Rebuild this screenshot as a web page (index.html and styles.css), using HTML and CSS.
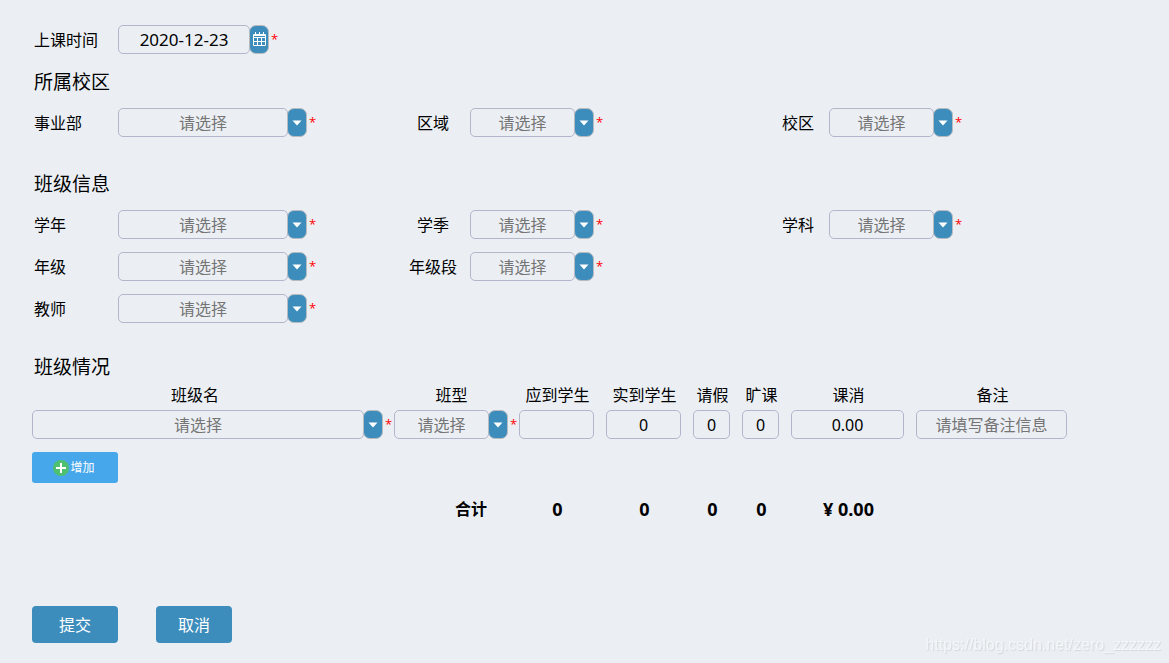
FILE: index.html
```html
<!DOCTYPE html>
<html lang="zh-CN">
<head>
  <meta charset="UTF-8" />
  <meta name="viewport" content="width=device-width, initial-scale=1.0" />
  <title>课消登记</title>
  <link rel="stylesheet" href="styles.css">
</head>
<body>
  <svg class="sprite" aria-hidden="true">
    <symbol id="caret" viewBox="0 0 10 6"><path d="M.5.5h9L5 5.500z" fill="currentColor" /></symbol>
  </svg>

  <form class="page">
    <div class="row">
      <label for="date">上课时间</label>
      <div class="field">
        <input type="text" id="date" class="box date" value="2020-12-23" />
        <button type="button" class="side" aria-label="选择日期">
          <svg width="13" height="15" viewBox="0 0 13 15" fill="none" stroke="currentColor">
            <path d="M.5 2.500h12v11H.5zM1 5.500h11M1 9.500h11M4.500 5v8M8.500 5v8" />
            <path d="M1 3.500h11M2.500 0v3M6.500 0v3M10.500 0v3" />
          </svg>
        </button>
        <span class="star">*</span>
      </div>
    </div>

    <h3>所属校区</h3>
    <div class="row">
      <label for="dept">事业部</label>
      <div class="field">
        <select id="dept" class="box wide"><option>请选择</option></select>
        <span class="side"><svg width="10" height="6"><use href="#caret" /></svg></span>
        <span class="star">*</span>
      </div>
      <label for="area" class="mid">区域</label>
      <div class="field">
        <select id="area" class="box"><option>请选择</option></select>
        <span class="side"><svg width="10" height="6"><use href="#caret" /></svg></span>
        <span class="star">*</span>
      </div>
      <label for="campus" class="mid">校区</label>
      <div class="field">
        <select id="campus" class="box"><option>请选择</option></select>
        <span class="side"><svg width="10" height="6"><use href="#caret" /></svg></span>
        <span class="star">*</span>
      </div>
    </div>

    <h3 class="spaced">班级信息</h3>
    <div class="row">
      <label for="year">学年</label>
      <div class="field">
        <select id="year" class="box wide"><option>请选择</option></select>
        <span class="side"><svg width="10" height="6"><use href="#caret" /></svg></span>
        <span class="star">*</span>
      </div>
      <label for="season" class="mid">学季</label>
      <div class="field">
        <select id="season" class="box"><option>请选择</option></select>
        <span class="side"><svg width="10" height="6"><use href="#caret" /></svg></span>
        <span class="star">*</span>
      </div>
      <label for="subject" class="mid">学科</label>
      <div class="field">
        <select id="subject" class="box"><option>请选择</option></select>
        <span class="side"><svg width="10" height="6"><use href="#caret" /></svg></span>
        <span class="star">*</span>
      </div>
    </div>
    <div class="row">
      <label for="grade">年级</label>
      <div class="field">
        <select id="grade" class="box wide"><option>请选择</option></select>
        <span class="side"><svg width="10" height="6"><use href="#caret" /></svg></span>
        <span class="star">*</span>
      </div>
      <label for="stage" class="mid">年级段</label>
      <div class="field">
        <select id="stage" class="box"><option>请选择</option></select>
        <span class="side"><svg width="10" height="6"><use href="#caret" /></svg></span>
        <span class="star">*</span>
      </div>
    </div>
    <div class="row">
      <label for="teacher">教师</label>
      <div class="field">
        <select id="teacher" class="box wide"><option>请选择</option></select>
        <span class="side"><svg width="10" height="6"><use href="#caret" /></svg></span>
        <span class="star">*</span>
      </div>
    </div>

    <h3 class="spaced tight">班级情况</h3>
    <table>
      <colgroup>
        <col />
        <col class="c-type" />
        <col class="c-count" />
        <col class="c-count" />
        <col class="c-small" />
        <col class="c-small" />
        <col class="c-fee" />
        <col class="c-note" />
      </colgroup>
      <thead>
        <tr>
          <th class="name" id="h-name">班级名</th>
          <th id="h-type">班型</th>
          <th id="h-due">应到学生</th>
          <th id="h-real">实到学生</th>
          <th id="h-leave">请假</th>
          <th id="h-absent">旷课</th>
          <th id="h-fee">课消</th>
          <th id="h-note">备注</th>
        </tr>
      </thead>
      <tbody>
        <tr>
          <td class="pick">
            <div class="field">
              <select class="box" aria-labelledby="h-name"><option>请选择</option></select>
              <span class="side"><svg width="10" height="6"><use href="#caret" /></svg></span>
              <span class="star">*</span>
            </div>
          </td>
          <td class="pick">
            <div class="field">
              <select class="box" aria-labelledby="h-type"><option>请选择</option></select>
              <span class="side"><svg width="10" height="6"><use href="#caret" /></svg></span>
              <span class="star">*</span>
            </div>
          </td>
          <td><input type="text" class="box" aria-labelledby="h-due" /></td>
          <td><input type="text" class="box" aria-labelledby="h-real" value="0" /></td>
          <td><input type="text" class="box" aria-labelledby="h-leave" value="0" /></td>
          <td><input type="text" class="box" aria-labelledby="h-absent" value="0" /></td>
          <td><input type="text" class="box" aria-labelledby="h-fee" value="0.00" /></td>
          <td><input type="text" class="box" aria-labelledby="h-note" placeholder="请填写备注信息" /></td>
        </tr>
        <tr>
          <td colspan="8" class="add-cell">
            <button type="button" class="add">
              <svg width="16" height="16" viewBox="0 0 16 16">
                <circle cx="8" cy="8" r="8" fill="#4fc06f" />
                <path d="M8 3v10M3 8h10" stroke="#fff" stroke-width="2" />
              </svg>
              增加
            </button>
          </td>
        </tr>
      </tbody>
      <tfoot>
        <tr>
          <td colspan="2" class="sum">合计</td>
          <td>0</td>
          <td>0</td>
          <td>0</td>
          <td>0</td>
          <td>¥ 0.00</td>
          <td></td>
        </tr>
      </tfoot>
    </table>

    <div class="actions">
      <button type="submit" class="btn submit">提交</button>
      <button type="button" class="btn">取消</button>
    </div>
  </form>

  <div class="watermark">https://blog.csdn.net/zero_zzzzzz</div>
</body>
</html>
```
FILE: styles.css
```css
* {
  box-sizing: border-box;
}

body {
  margin: 0;
  background: #ebeff4;
  color: #000;
  font-family: "Noto Sans", "Noto Sans CJK SC", sans-serif;
  font-size: 16px;
  line-height: 24px;
}

input,
select,
button {
  font: inherit;
}

.sprite {
  display: none;
}

.page {
  padding: 25px 32px 20px;
}

h3 {
  margin: 16px 0 14px;
  padding-left: 2px;
  font-size: 19px;
  font-weight: 400;
}

h3.spaced {
  margin-top: 35px;
}

h3.tight {
  margin-top: 32px;
  margin-bottom: 4px;
}

/* label / field pairs, three per row */
.row {
  display: grid;
  grid-template-columns: 86px 278fr 74px 297fr 62px 308fr;
  align-items: center;
}

.row + .row {
  margin-top: 13px;
}

.row label {
  padding-left: 2px;
}

.row label.mid {
  padding: 0;
  text-align: center;
}

.field {
  display: flex;
  align-items: center;
}

.box {
  display: block;
  width: 105px;
  height: 29px;
  margin: 0;
  padding: 0 2px;
  border: 1px solid #b3b5cb;
  border-radius: 5px;
  background: transparent;
  color: #000;
  line-height: 24px;
  text-align: center;
  outline: none;
}

select.box {
  appearance: none;
  color: #757575;
  text-align-last: center;
}

.box::placeholder {
  color: #757575;
}

.box.wide {
  width: 170px;
}

.box.date {
  width: 132px;
  font-size: 17px;
}

.side {
  display: flex;
  flex: none;
  align-items: center;
  justify-content: center;
  width: 20px;
  height: 29px;
  margin-left: -1px;
  padding: 0;
  border: 1px solid #b8bcc0;
  border-radius: 7px;
  background: #3c8dbc;
  color: #fff;
}

.star {
  width: 11px;
  padding: 0 0 2px 2px;
  color: #f00;
  font-family: "Open Sans", sans-serif;
  font-size: 13px;
}

table {
  width: 100%;
  padding-right: 58px;
  border-spacing: 0;
  table-layout: fixed;
}

.c-type,
.c-fee {
  width: 125px;
}

.c-count {
  width: 87px;
}

.c-small {
  width: 49px;
}

.c-note {
  width: 163px;
}

th {
  padding: 0 10px 3px 0;
  font-weight: 400;
  white-space: nowrap;
}

th.name {
  padding-right: 36px;
}

td {
  padding: 0 12px 0 0;
}

td.pick {
  padding-right: 0;
}

td .box {
  flex: 1;
  width: 100%;
  min-width: 0;
}

td.add-cell {
  padding-top: 13px;
}

.add {
  display: flex;
  align-items: center;
  justify-content: center;
  gap: 1px;
  width: 86px;
  height: 31px;
  padding: 0 2px 0 0;
  border: none;
  border-radius: 3px;
  background: #46a7eb;
  color: #fff;
  font-size: 12px;
}

tfoot td {
  padding-top: 14px;
  padding-right: 10px;
  font-size: 18px;
  font-weight: 700;
  text-align: center;
}

tfoot td.sum {
  padding-right: 32px;
  font-size: 16px;
  text-align: right;
}

.actions {
  display: flex;
  gap: 38px;
  margin-top: 85px;
}

.btn {
  width: 76px;
  height: 37px;
  padding: 0;
  border: none;
  border-radius: 4px;
  background: #3c8dbc;
  color: #fff;
}

.btn.submit {
  width: 86px;
}

.watermark {
  position: fixed;
  right: 8px;
  bottom: 6px;
  color: #f4f7fa;
  font-family: "Liberation Sans", sans-serif;
  text-shadow: 1px 1px 1px #d4d7db;
}
```
